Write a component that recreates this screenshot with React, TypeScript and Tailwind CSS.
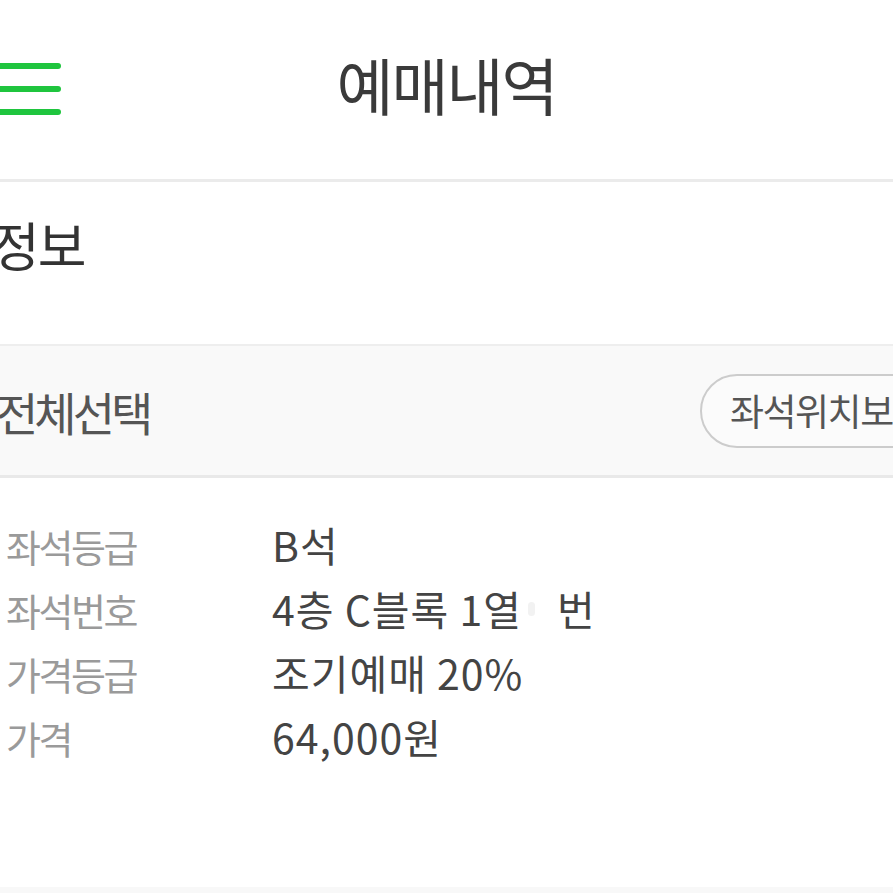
import React from "react";

const font = { fontFamily: '"Noto Sans CJK KR", "Noto Sans", sans-serif' };

function Row({ label, children }: { label: string; children: React.ReactNode }) {
  return (
    <div className="flex items-center h-[64px]">
      <div className="w-[272px] pl-[6px] text-[38px] tracking-[-2.5px] text-[#9a9a9a] whitespace-nowrap">{label}</div>
      <div className="text-[41px] tracking-[1px] text-[#444444] flex items-center whitespace-nowrap">{children}</div>
    </div>
  );
}

export default function App() {
  return (
    <div className="w-[893px] h-[893px] overflow-hidden bg-white relative" style={font}>
      <header className="h-[179px] relative flex items-center justify-center">
        <div className="absolute left-0 top-[63px] flex flex-col gap-[17px]">
          <div className="w-[61px] h-[6px] bg-[#1fc53e] rounded-r-full" />
          <div className="w-[61px] h-[6px] bg-[#1fc53e] rounded-r-full" />
          <div className="w-[61px] h-[6px] bg-[#1fc53e] rounded-r-full" />
        </div>
        <h1 className="text-[62px] text-[#3a3a3a] tracking-[-2px] leading-none mt-[-12px]">예매내역</h1>
      </header>
      <div className="h-[3px] bg-[#ebebeb]" />
      <div className="h-[162px] flex items-start">
        <div className="text-[53px] text-[#333333] ml-[-9px] mt-[36px] leading-none tracking-[-2px]">정보</div>
      </div>
      <div className="h-[2px] bg-[#eeeeee]" />
      <div className="h-[129px] bg-[#f9f9f9] flex items-center justify-between">
        <div className="text-[46px] tracking-[-4px] text-[#555555] ml-[-4px] mt-[2px] whitespace-nowrap">전체선택</div>
        <div className="mr-[-100px] h-[74px] w-[293px] rounded-full border-2 border-[#cccccc] bg-[#fbfbfb] flex items-center pl-[28px]">
          <span className="text-[37px] tracking-[-1.5px] text-[#555555] whitespace-nowrap">좌석위치보기</span>
        </div>
      </div>
      <div className="h-[3px] bg-[#e9e9e9]" />
      <div className="pt-[35px] flex flex-col">
        <Row label="좌석등급">B석</Row>
        <Row label="좌석번호">
          <span>4층 C블록 1열</span>
          <span className="inline-block w-[7px] h-[14px] rounded-full bg-[#f2f2f2] ml-[6px] mr-[22px]" />
          <span>번</span>
        </Row>
        <Row label="가격등급">조기예매 20%</Row>
        <Row label="가격">64,000원</Row>
      </div>
      <div className="absolute left-0 right-0 top-[887px] h-[6px] bg-[#f8f8f8]" />
    </div>
  );
}
